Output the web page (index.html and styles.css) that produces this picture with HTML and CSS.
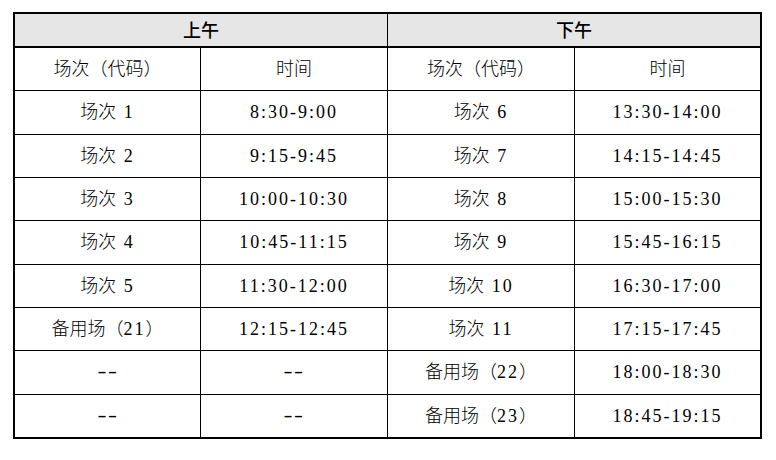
FILE: index.html
```html
<!DOCTYPE html>
<html lang="zh-CN">
<head>
<meta charset="utf-8">
<title>场次时间表</title>
<link rel="stylesheet" href="styles.css">
</head>
<body>
<div class="sheet">
  <div class="grid">
    <div class="cell head span2">上午</div>
    <div class="cell head span2">下午</div>

    <div class="cell">场次（代码）</div>
    <div class="cell">时间</div>
    <div class="cell">场次（代码）</div>
    <div class="cell">时间</div>

    <div class="cell">场次 <span class="num gap">1</span></div>
    <div class="cell num">8:30-9:00</div>
    <div class="cell">场次 <span class="num gap">6</span></div>
    <div class="cell num">13:30-14:00</div>

    <div class="cell">场次 <span class="num gap">2</span></div>
    <div class="cell num">9:15-9:45</div>
    <div class="cell">场次 <span class="num gap">7</span></div>
    <div class="cell num">14:15-14:45</div>

    <div class="cell">场次 <span class="num gap">3</span></div>
    <div class="cell num">10:00-10:30</div>
    <div class="cell">场次 <span class="num gap">8</span></div>
    <div class="cell num">15:00-15:30</div>

    <div class="cell">场次 <span class="num gap">4</span></div>
    <div class="cell num">10:45-11:15</div>
    <div class="cell">场次 <span class="num gap">9</span></div>
    <div class="cell num">15:45-16:15</div>

    <div class="cell">场次 <span class="num gap">5</span></div>
    <div class="cell num">11:30-12:00</div>
    <div class="cell">场次 <span class="num gap">10</span></div>
    <div class="cell num">16:30-17:00</div>

    <div class="cell">备用场（<span class="num">21</span>）</div>
    <div class="cell num">12:15-12:45</div>
    <div class="cell">场次 <span class="num gap">11</span></div>
    <div class="cell num">17:15-17:45</div>

    <div class="cell"><span class="dash">--</span></div>
    <div class="cell"><span class="dash">--</span></div>
    <div class="cell">备用场（<span class="num">22</span>）</div>
    <div class="cell num">18:00-18:30</div>

    <div class="cell"><span class="dash">--</span></div>
    <div class="cell"><span class="dash">--</span></div>
    <div class="cell">备用场（<span class="num">23</span>）</div>
    <div class="cell num">18:45-19:15</div>
  </div>
</div>
</body>
</html>
```

FILE: styles.css
```css
html, body {
  margin: 0;
  padding: 0;
  background: #ffffff;
}

body {
  font-family: "Liberation Serif", "Noto Sans CJK SC", serif;
  font-size: 18px;
  color: #000000;
}

.sheet {
  padding: 12px 0 0 13px;
}

.grid {
  width: 745px;
  height: 423px;
  border: 2px solid #000000;
  background: #000000;
  display: grid;
  grid-template-columns: 185px 186px 186px 185px;
  grid-template-rows: 33px repeat(9, 1fr);
  gap: 1px;
}

.cell {
  background: #ffffff;
  display: flex;
  align-items: center;
  justify-content: center;
  font-weight: 300;
  white-space: pre;
  line-height: 1;
}

.head {
  background: #e7e6e6;
  font-weight: 500;
  border-bottom: 1px solid #000000;
  padding-top: 1px;
}

.span2 {
  grid-column: span 2;
}

.num {
  letter-spacing: 2px;
  font-weight: 400;
}

.gap {
  margin-left: 3px;
}

.dash {
  display: inline-block;
  font-weight: 400;
  letter-spacing: 1px;
  transform: scaleX(1.5);
  margin-top: -2px;
}
```
